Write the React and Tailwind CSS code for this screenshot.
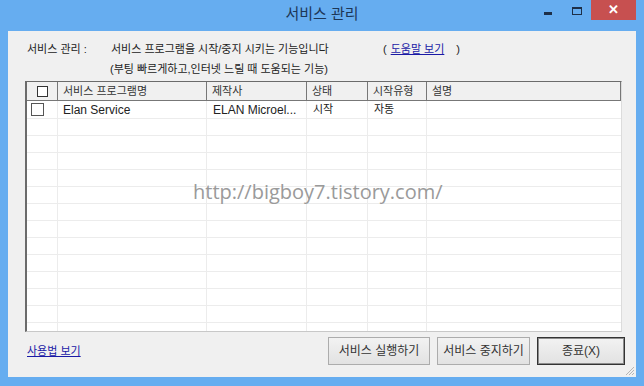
const cols = [
  { w: 'w-[31px]' },
  { w: 'w-[149px]', label: '서비스 프로그램명' },
  { w: 'w-[100px]', label: '제작사' },
  { w: 'w-[61px]', label: '상태' },
  { w: 'w-[59px]', label: '시작유형' },
  { w: 'flex-1', label: '설명' },
];

const rows = [
  { name: 'Elan Service', maker: 'ELAN Microel...', state: '시작', type: '자동', desc: '' },
];

function CheckBox({ size = 'w-[12px] h-[12px]' }) {
  return <span className={`block ${size} border border-[#333] bg-white`} />;
}

function WinButton({ children, primary }) {
  return (
    <button
      className={`w-full h-[28px] flex items-center justify-center bg-gradient-to-b from-[#f2f2f2] to-[#e2e2e2] text-[12px] text-[#333] ${
        primary ? 'border border-[#333] shadow-[inset_0_0_0_1px_#8c8c8c]' : 'border border-[#acacac]'
      }`}
    >
      {children}
    </button>
  );
}

export default function App() {
  const blank = Array.from({ length: 13 });

  return (
    <div
      className="w-[644px] h-[386px] bg-[#66adf0] flex flex-col px-[8px] pb-[9px] overflow-hidden"
      style={{ fontFamily: '"Liberation Sans", "Noto Sans CJK KR", sans-serif' }}
    >
      {/* title bar */}
      <div className="h-[31px] relative flex items-center justify-center shrink-0">
        <span className="text-[15px] text-[#1d3656] -mt-[3px]">서비스 관리</span>
        <div className="absolute right-0 top-0 flex items-start">
          <span className="mt-[12px] mr-[20px] block w-[8px] h-[3px] bg-[#1d2f48]" />
          <span className="mt-[7px] mr-[9px] block w-[10px] h-[8px] border border-[#1d2f48] border-t-2" />
          <span className="w-[45px] h-[20px] bg-[#c75050] flex items-center justify-center text-white text-[13px] font-bold">
            ✕
          </span>
        </div>
      </div>

      {/* client area */}
      <div className="flex-1 bg-[#f0f0f0] flex flex-col relative text-[11px] text-[#222]">
        <div className="flex items-center h-[18px] mt-[9px]">
          <span className="ml-[19px] w-[84px]">서비스 관리 :</span>
          <span className="w-[269px]">서비스 프로그램을 시작/중지 시키는 기능입니다</span>
          <span className="ml-[3px]">(</span>
          <span className="ml-[4px] text-[#1a1aa6] underline">도움말 보기</span>
          <span className="ml-[12px]">)</span>
        </div>
        <div className="flex items-center h-[18px] mt-[2px]">
          <span className="ml-[102px]">(부팅 빠르게하고,인터넷 느릴 때 도움되는 기능)</span>
        </div>

        {/* list */}
        <div className="ml-[17px] mr-[14px] mt-[3px] h-[251px] bg-white border-l-2 border-t border-[#6b6b6b] border-r border-b border-r-[#dcdcdc] border-b-[#c8c8c8] flex flex-col overflow-hidden relative">
          <div className="flex h-[19px] shrink-0 bg-[#f0f0f0] border border-[#777] border-l-0 border-t-0">
            {cols.map((c, i) => (
              <div
                key={i}
                className={`${c.w} flex items-center border-r border-[#777] last:border-r-0 ${i === 0 ? 'justify-center' : 'pl-[5px]'} text-[#333]`}
              >
                {i === 0 ? <CheckBox size="w-[11px] h-[11px]" /> : c.label}
              </div>
            ))}
          </div>
          {rows.map((r, k) => (
            <div key={k} className="flex h-[18px] shrink-0 border-b border-[#ececec] text-[12px] text-[#222]">
              <div className="w-[31px] flex items-center pl-[4px] border-r border-[#ececec]">
                <span className="block w-[13px] h-[13px] border border-[#555] bg-white" />
              </div>
              <div className="w-[149px] flex items-center pl-[5px] border-r border-[#ececec]">{r.name}</div>
              <div className="w-[100px] flex items-center pl-[6px] border-r border-[#ececec]">{r.maker}</div>
              <div className="w-[61px] flex items-center pl-[6px] border-r border-[#ececec] text-[11px]">{r.state}</div>
              <div className="w-[59px] flex items-center pl-[6px] border-r border-[#ececec] text-[11px]">{r.type}</div>
              <div className="flex-1">{r.desc}</div>
            </div>
          ))}
          {blank.map((_, k) => (
            <div key={k} className="flex h-[17px] shrink-0 border-b border-[#ececec]">
              {cols.map((c, i) => (
                <div key={i} className={`${c.w} border-r border-[#ececec] last:border-r-0`} />
              ))}
            </div>
          ))}
          <div
            className="absolute left-[166px] top-[95px] text-[20px] text-[#9a9a9a]"
            style={{ fontFamily: '"Open Sans", sans-serif' }}
          >
            http://bigboy7.tistory.com/
          </div>
        </div>

        {/* footer */}
        <div className="flex items-center mt-[5px]">
          <span className="ml-[19px] text-[#1a1aa6] underline">사용법 보기</span>
          <div className="ml-auto mr-[11px] flex gap-[7px]">
            <div className="w-[102px]">
              <WinButton>서비스 실행하기</WinButton>
            </div>
            <div className="w-[93px]">
              <WinButton>서비스 중지하기</WinButton>
            </div>
            <div className="w-[88px]">
              <WinButton primary>종료(X)</WinButton>
            </div>
          </div>
        </div>

        {/* resize grip */}
        <svg className="absolute right-[1px] bottom-[1px]" width="11" height="11" viewBox="0 0 11 11">
          <path d="M10 2L2 10M10 5L5 10M10 8L8 10" stroke="#b5b5b5" strokeWidth="1" />
        </svg>
      </div>
    </div>
  );
}
